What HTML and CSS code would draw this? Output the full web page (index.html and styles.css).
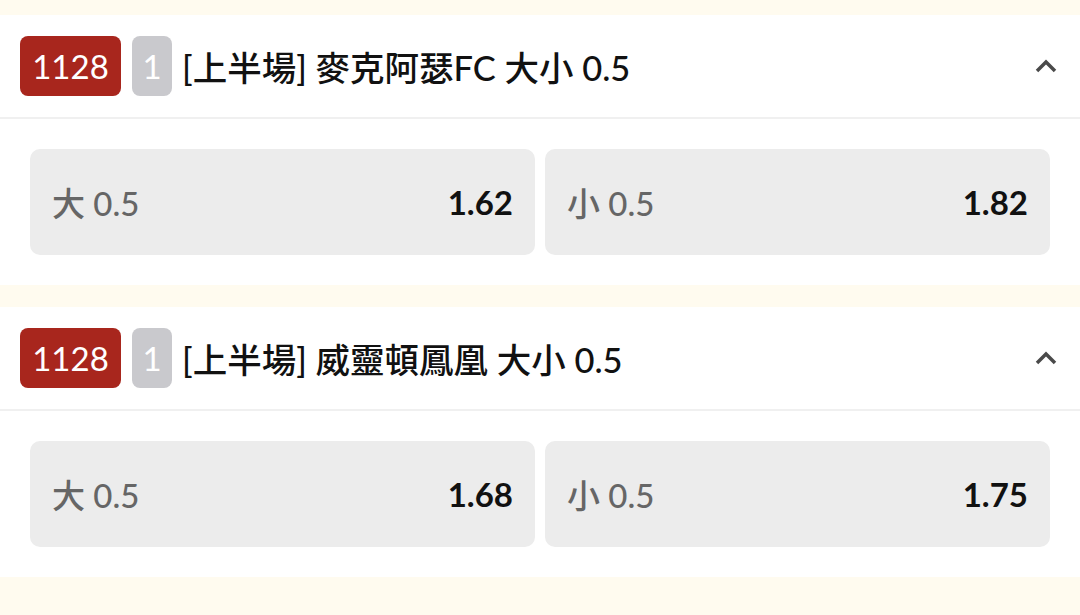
FILE: index.html
```html
<!DOCTYPE html>
<html lang="zh-Hant">
<head>
    <meta charset="UTF-8">
    <meta name="viewport" content="width=device-width, initial-scale=1.0">
    <title>大小盤</title>
    <link rel="stylesheet" href="styles.css">
</head>
<body>
    <div class="market-list">
        <div class="market">
            <div class="market-head">
                <span class="tag-no">1128</span>
                <span class="tag-period">1</span>
                <span class="market-title">[上半場] 麥克阿瑟FC 大小 0.5</span>
                <svg class="toggle" width="24" height="16" viewBox="0 0 24 16"><path d="M3 13 L12 4 L21 13" fill="none" stroke="#4a4a4a" stroke-width="3.5"/></svg>
            </div>
            <div class="odds-row">
                <button class="odd"><span class="odd-label">大 0.5</span><span class="odd-value">1.62</span></button>
                <button class="odd"><span class="odd-label">小 0.5</span><span class="odd-value">1.82</span></button>
            </div>
        </div>
        <div class="market">
            <div class="market-head">
                <span class="tag-no">1128</span>
                <span class="tag-period">1</span>
                <span class="market-title">[上半場] 威靈頓鳳凰 大小 0.5</span>
                <svg class="toggle" width="24" height="16" viewBox="0 0 24 16"><path d="M3 13 L12 4 L21 13" fill="none" stroke="#4a4a4a" stroke-width="3.5"/></svg>
            </div>
            <div class="odds-row">
                <button class="odd"><span class="odd-label">大 0.5</span><span class="odd-value">1.68</span></button>
                <button class="odd"><span class="odd-label">小 0.5</span><span class="odd-value">1.75</span></button>
            </div>
        </div>
    </div>
</body>
</html>
```

FILE: styles.css
```css
body{
    margin: 0;
    background: #fffbef;
    font-family: Lato, "Noto Sans CJK TC", sans-serif;
    height: 615px;
    overflow: hidden;
}
.market-list{
    display: flex;
    flex-direction: column;
    gap: 22px;
    padding-top: 15px;
}
.market{
    background: #fff;
}
.market-head{
    height: 102px;
    display: flex;
    align-items: center;
    padding: 0 22px 0 20px;
    border-bottom: 2px solid #f0f0f0;
}
.tag-no,.tag-period{
    height: 60px;
    display: flex;
    align-items: center;
    justify-content: center;
    color: #fff;
    font-size: 33px;
    border-radius: 8px;
}
.tag-no{
    width: 101px;
    background: #a8261d;
}
.tag-period{
    width: 40px;
    margin-left: 11px;
    background: #c9c9cd;
}
.market-title{
    flex: 1;
    margin-left: 10px;
    font-size: 34.5px;
    font-weight: 500;
    color: #111;
}
.toggle{
    display: block;
}
.odds-row{
    display: grid;
    grid-template-columns: 1fr 1fr;
    gap: 10px;
    padding: 30px;
}
.odd{
    height: 106px;
    border: none;
    border-radius: 10px;
    background: #ececec;
    display: flex;
    align-items: center;
    justify-content: space-between;
    padding: 0 22px;
    font-family: Lato, "Noto Sans CJK TC", sans-serif;
    font-size: 33px;
    cursor: pointer;
}
.odd-label{
    color: #666;
    font-weight: 500;
}
.odd-value{
    color: #111;
    font-weight: bold;
}
```
